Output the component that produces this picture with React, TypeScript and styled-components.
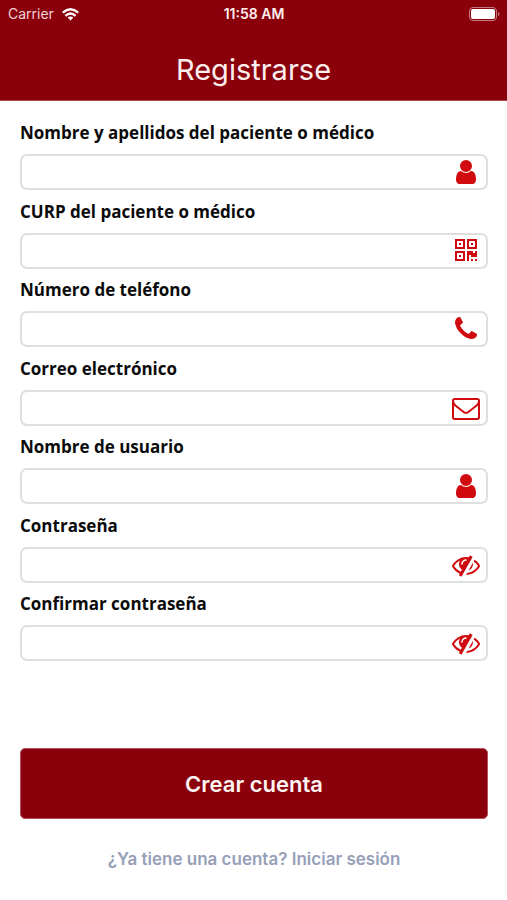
import React, { useId } from "react";
import styled, { createGlobalStyle } from "styled-components";

const GlobalStyle = createGlobalStyle`
  *, *::before, *::after { box-sizing: border-box; }
  body { margin: 0; background: #fff; }
`;

const brand = "#8a000b";
const uiFont = `Inter, "Liberation Sans", sans-serif`;

const Screen = styled.div`
  display: flex;
  flex-direction: column;
  min-height: 100vh;
  font-family: ${uiFont};
`;

const Header = styled.header`
  background: ${brand};
  color: #fdeeee;
  border-bottom: 1px solid #a8434b;
`;

const StatusBar = styled.div`
  display: grid;
  grid-template-columns: 1fr auto 1fr;
  align-items: center;
  height: 28px;
  padding: 0 7px 0 8px;
  font-size: 14px;
  line-height: 20px;
`;

const Carrier = styled.span`
  display: flex;
  align-items: center;
  gap: 8px;
  color: #f3d3d5;
`;

const Clock = styled.time`
  font-size: 14px;
  font-weight: 600;
`;

const Battery = styled.svg`
  justify-self: end;
`;

const Title = styled.h1`
  margin: 0;
  padding: 23px 0 11px;
  font-size: 29px;
  line-height: 38px;
  font-weight: 400;
  text-align: center;
`;

const Form = styled.form`
  flex: 1;
  display: flex;
  flex-direction: column;
  padding: 20px 19px 28px 20px;
`;

const Fields = styled.div`
  flex: 1;
  display: flex;
  flex-direction: column;
  justify-content: space-between;
`;

const Field = styled.div`
  display: flex;
  flex-direction: column;
  gap: 9px;
`;

const Label = styled.label`
  font-family: "Open Sans", "Noto Sans", sans-serif;
  font-size: 17px;
  line-height: 24px;
  font-weight: 700;
  color: #0b0b0b;
`;

const InputBox = styled.div`
  display: flex;
  align-items: center;
  height: 36px;
  padding: 0 6px 0 8px;
  border: 2px solid #dfdfdf;
  border-radius: 7px;
  background: #fff;
`;

const Input = styled.input`
  flex: 1;
  min-width: 0;
  height: 100%;
  padding: 0;
  border: 0;
  outline: 0;
  background: transparent;
  font: 400 16px ${uiFont};
`;

const FieldIcon = styled.svg`
  flex: none;
  width: 28px;
  height: 28px;
  fill: #d00a0e;
`;

const ToggleButton = styled.button`
  display: flex;
  padding: 0;
  border: 0;
  background: none;
  cursor: pointer;
`;

const Submit = styled.button`
  height: 71px;
  margin-top: 87px;
  border: 1px solid #b0545c;
  border-radius: 5px;
  background: ${brand};
  color: #fdf3f3;
  font: 600 22px ${uiFont};
  cursor: pointer;
`;

const LoginLink = styled.a`
  align-self: center;
  margin-top: 28px;
  font-size: 17px;
  line-height: 25px;
  font-weight: 600;
  color: #96a0b8;
  text-decoration: none;
`;

const icons = {
  user: "M1536 1399q0 109-62.5 187t-150.5 78h-854q-88 0-150.5-78t-62.5-187q0-85 8.5-160.5t31.5-152 58.5-131 94-89 134.5-34.5q131 128 313 128t313-128q76 0 134.5 34.5t94 89 58.5 131 31.5 152 8.5 160.5zm-256-887q0 159-112.5 271.5t-271.5 112.5-271.5-112.5-112.5-271.5 112.5-271.5 271.5-112.5 271.5 112.5 112.5 271.5z",
  qrcode: "M576 1152v128h-128v-128h128zm0-768v128h-128v-128h128zm768 0v128h-128v-128h128zm-1024 1023h384v-383h-384v383zm0-767h384v-384h-384v384zm768 0h384v-384h-384v384zm-256 256v640h-640v-640h640zm512 512v128h-128v-128h128zm256 0v128h-128v-128h128zm0-512v384h-384v-128h-128v384h-128v-640h384v128h128v-128h128zm-768-768v640h-640v-640h640zm768 0v640h-640v-640h640z",
  phone: "M1600 1240q0 27-10 70.5t-21 68.5q-21 50-122 106-94 51-186 51-27 0-52.5-3.5t-57.5-12.5-47.5-14.5-55.5-20.5-49-18q-98-35-175-83-128-79-264.5-215.5t-215.5-264.5q-48-77-83-175-3-9-18-49t-20.5-55.5-14.5-47.5-12.5-57.5-3.5-52.5q0-92 51-186 56-101 106-122 25-11 68.5-21t70.5-10q14 0 21 3 18 6 53 76 11 19 30 54t35 63.5 31 53.5q3 4 17.5 25t21.5 35.5 7 28.5q0 20-28.5 50t-62 55-62 53-28.5 46q0 9 5 22.5t8.5 20.5 14 24 11.5 19q76 137 174 235t235 174q2 1 19 11.5t24 14 20.5 8.5 22.5 5q18 0 46-28.5t53-62 55-62 50-28.5q14 0 28.5 7t35.5 21.5 25 17.5q25 15 53.5 31t63.5 35 54 30q70 35 76 53 3 7 3 21z",
  envelope: "M1664 1504v-768q-32 36-69 66-268 206-426 338-51 43-83 67t-86.5 48.5-102.5 24.5h-2q-48 0-102.5-24.5t-86.5-48.5-83-67q-158-132-426-338-37-30-69-66v768q0 13 9.5 22.5t22.5 9.5h1472q13 0 22.5-9.5t9.5-22.5zm0-1051v-24.5l-.5-13-3-12.5-5.5-9-9-7.5-14-2.5h-1472q-13 0-22.5 9.5t-9.5 22.5q0 168 147 284 193 152 401 317 6 5 35 29.5t46 37.5 44.5 31.5 50.5 27.5 43 9h2q20 0 43-9t50.5-27.5 44.5-31.5 46-37.5 35-29.5q208-165 401-317 54-43 100.5-115.5t46.5-131.5zm128-37v1088q0 66-47 113t-113 47h-1472q-66 0-113-47t-47-113v-1088q0-66 47-113t113-47h1472q66 0 113 47t47 113z",
  eyeSlash: "M555 1335l78-141q-87-63-136-159t-49-203q0-121 61-225-229 117-381 353 167 258 427 375zm389-759q0-20-14-34t-34-14q-125 0-214.5 89.5t-89.5 214.5q0 20 14 34t34 14 34-14 14-34q0-86 61-147t147-61q20 0 34-14t14-34zm363-191q0 7-1 9-106 189-316 567t-315 566l-49 89q-10 16-28 16-12 0-134-70-16-10-16-28 0-12 44-87-143-65-263.5-173t-208.5-245q-20-31-20-69t20-69q153-235 380-371t496-136q89 0 180 17l54-97q10-16 28-16 5 0 18 6t31 15.5 33 18.5 31.5 18.5 19.5 11.5q16 10 16 27zm37 447q0 139-79 253.5t-209 164.5l280-502q8 45 8 84zm448 128q0 35-20 69-39 64-109 145-150 172-347.5 267t-419.5 95l74-132q212-18 392.5-137t301.5-307q-115-179-282-294l63-112q95 64 182.5 153t144.5 184q20 34 20 69z",
};

type IconName = keyof typeof icons;

interface FieldSpec {
  label: string;
  icon: IconName;
  type: string;
}

const fields: FieldSpec[] = [
  { label: "Nombre y apellidos del paciente o médico", icon: "user", type: "text" },
  { label: "CURP del paciente o médico", icon: "qrcode", type: "text" },
  { label: "Número de teléfono", icon: "phone", type: "tel" },
  { label: "Correo electrónico", icon: "envelope", type: "email" },
  { label: "Nombre de usuario", icon: "user", type: "text" },
  { label: "Contraseña", icon: "eyeSlash", type: "password" },
  { label: "Confirmar contraseña", icon: "eyeSlash", type: "password" },
];

function FormField({ label, icon, type }: FieldSpec) {
  const id = useId();
  const [visible, setVisible] = React.useState(false);
  const glyph = (
    <FieldIcon viewBox="0 0 1792 1792" aria-hidden="true">
      <path d={icons[icon]} />
    </FieldIcon>
  );
  return (
    <Field>
      <Label htmlFor={id}>{label}</Label>
      <InputBox>
        <Input id={id} type={visible ? "text" : type} />
        {type === "password" ? (
          <ToggleButton
            type="button"
            aria-label="Mostrar contraseña"
            aria-pressed={visible}
            onClick={() => setVisible(!visible)}
          >
            {glyph}
          </ToggleButton>
        ) : (
          glyph
        )}
      </InputBox>
    </Field>
  );
}

export default function App() {
  return (
    <Screen>
      <GlobalStyle />
      <Header>
        <StatusBar>
          <Carrier>
            Carrier
            <svg width="17" height="13" viewBox="0 0 17 13" fill="none" stroke="#fff" strokeWidth="2.4" aria-hidden="true">
              <path d="M0.8 4.7Q8.5-2 16.2 4.7" />
              <path d="M3.4 7.8Q8.5 3.3 13.6 7.8" />
              <path d="M8.5 12.6L5.6 9.6Q8.5 7.2 11.4 9.6Z" fill="#fff" stroke="none" />
            </svg>
          </Carrier>
          <Clock>11:58 AM</Clock>
          <Battery width="31" height="14" viewBox="0 0 31 14" aria-hidden="true">
            <rect x="0.5" y="0.5" width="27" height="13" rx="3.5" fill="none" stroke="#c47a80" />
            <rect x="2" y="2" width="24" height="10" rx="2" fill="#fff" />
            <path d="M29 5Q30.6 5.6 30.6 7T29 9Z" fill="#c47a80" />
          </Battery>
        </StatusBar>
        <Title>Registrarse</Title>
      </Header>
      <Form onSubmit={(event) => event.preventDefault()}>
        <Fields>
          {fields.map((field) => (
            <FormField key={field.label} {...field} />
          ))}
        </Fields>
        <Submit type="submit">Crear cuenta</Submit>
        <LoginLink href="#login">¿Ya tiene una cuenta? Iniciar sesión</LoginLink>
      </Form>
    </Screen>
  );
}
